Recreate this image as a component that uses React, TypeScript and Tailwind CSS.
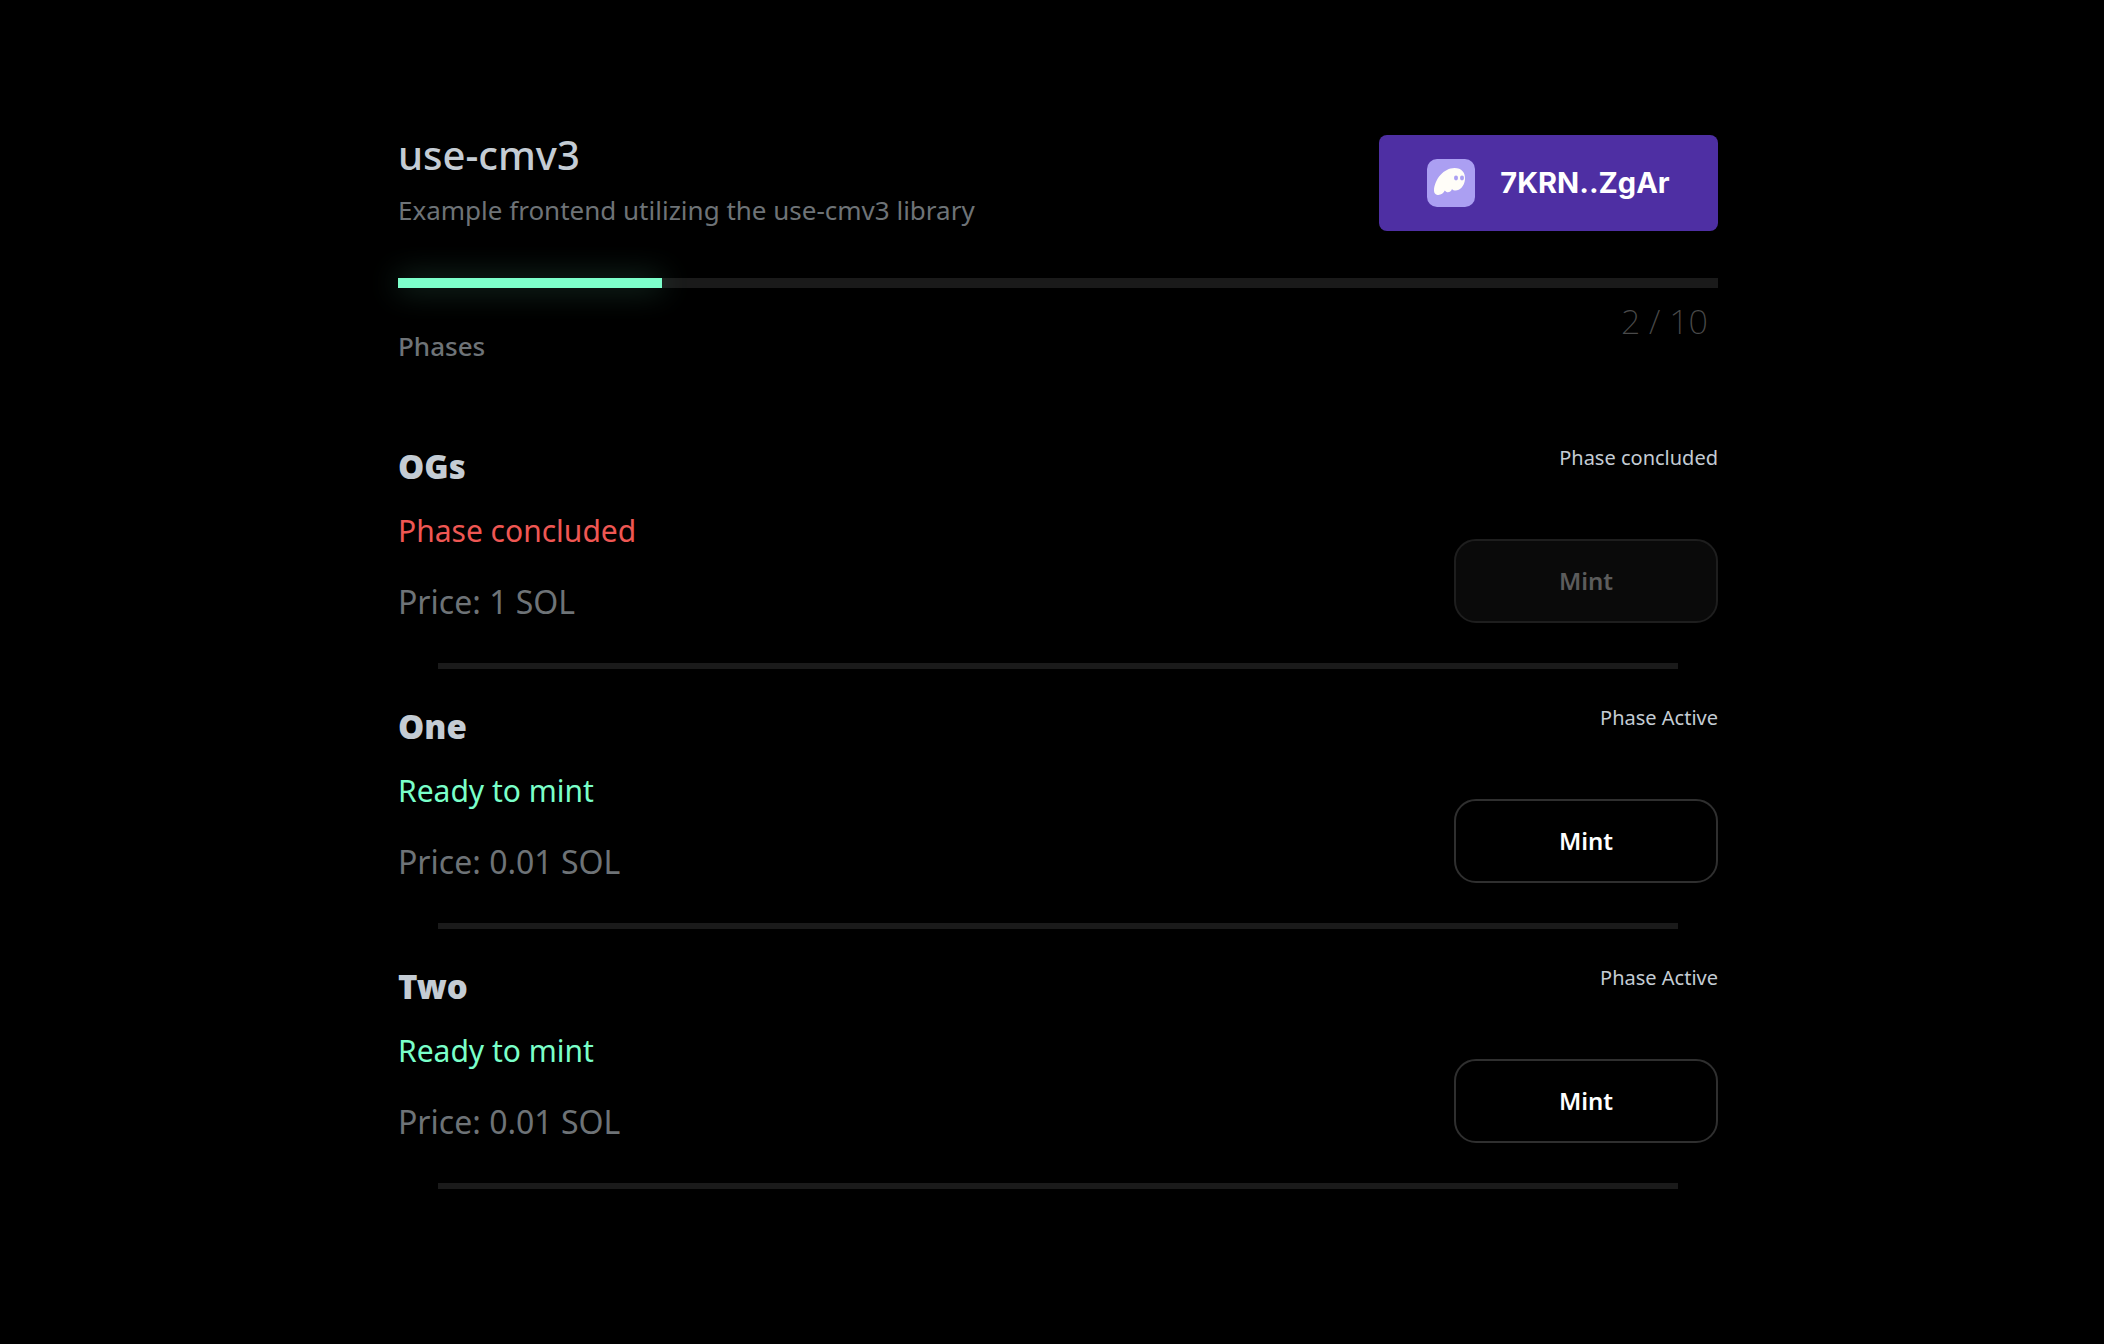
const phases = [
  { name: "OGs", badge: "Phase concluded", status: "Phase concluded", price: "1 SOL", active: false },
  { name: "One", badge: "Phase Active", status: "Ready to mint", price: "0.01 SOL", active: true },
  { name: "Two", badge: "Phase Active", status: "Ready to mint", price: "0.01 SOL", active: true },
];

function GhostIcon() {
  return (
    <svg width="48" height="48" viewBox="0 0 48 48" className="shrink-0">
      <rect width="48" height="48" rx="10" fill="#ab9ff2" />
      <path
        d="M7 31.5C7.5 20 17 9 27.5 9C34.5 9 38.6 13.5 38 20.5C37.4 27 33 31.5 28.5 31.5C27 31.5 25.8 31 25 30C24 32.6 21.6 33.8 19.6 33C18.8 32.7 18.2 32.2 17.8 31.6C16.6 34.4 13.4 36.4 10.6 36C8.4 35.7 6.9 34 7 31.5Z"
        fill="#fffdf8"
      />
      <ellipse cx="29" cy="19" rx="2" ry="2.4" fill="#ab9ff2" />
      <ellipse cx="35" cy="19" rx="2" ry="2.4" fill="#ab9ff2" />
    </svg>
  );
}

function PhaseRow({ phase }: { phase: (typeof phases)[number] }) {
  return (
    <div>
      <div className="flex h-[254px] justify-between pt-[33px] pb-[40px]">
        <div className="flex flex-col">
          <h3 className="text-[33px] leading-[50px] font-black text-[#c4ccd4]">{phase.name}</h3>
          <p
            className={
              phase.active
                ? "mt-[14px] text-[30px] leading-[50px] text-[#7affc9]"
                : "mt-[14px] text-[30px] leading-[50px] text-[#ef5753]"
            }
          >
            {phase.status}
          </p>
          <p className="mt-[21px] text-[32px] leading-[50px] text-[#6e7377]">Price: {phase.price}</p>
        </div>

        <div className="flex flex-col items-end justify-between">
          <span className="text-[20px] leading-[32px] text-[#c4ccd4]">{phase.badge}</span>
          <button
            className={
              phase.active
                ? "h-[84px] w-[264px] rounded-[22px] border-2 border-[#2f2f2f] bg-black text-[24px] font-semibold text-white"
                : "h-[84px] w-[264px] rounded-[22px] border-2 border-[#1e1e1e] bg-[#0a0a0a] text-[24px] font-semibold text-[#5c5c5c]"
            }
          >
            Mint
          </button>
        </div>
      </div>
      <div className="mx-10 h-[6px] bg-[#1a1a1a]" />
    </div>
  );
}

export default function App() {
  return (
    <div
      className="flex min-h-screen justify-center bg-black pt-[135px] pl-3"
      style={{ fontFamily: '"Noto Sans", "Open Sans", sans-serif' }}
    >
      <div className="w-[1320px]">
        {/* HEADER */}
        <div className="flex items-start justify-between">
          <div>
            <h1 className="text-[40px] leading-[40px] font-medium text-[#c4ccd4]">use-cmv3</h1>
            <p className="mt-[15px] text-[26px] leading-[40px] text-[#6e7377]">
              Example frontend utilizing the use-cmv3 library
            </p>
          </div>
          <button className="flex h-[96px] w-[339px] items-center justify-center gap-[25px] rounded-lg bg-[#4e2fa3]">
            <GhostIcon />
            <span
              className="text-[29px] font-bold text-white"
              style={{ fontFamily: "Inter, sans-serif" }}
            >
              7KRN..ZgAr
            </span>
          </button>
        </div>

        {/* PROGRESS */}
        <div className="mt-[47px] h-[10px] bg-[#1a1a1a]">
          <div className="h-full w-1/5 bg-[#7dffcb] shadow-[0_0_30px_rgba(125,255,203,0.3)]" />
        </div>

        <div className="flex items-start justify-between pr-[10px]">
          <h2 className="mt-[38px] text-[26px] leading-[40px] font-medium text-[#6e7377]">Phases</h2>
          <span className="mt-[9px] text-[34px] leading-[48px] font-extralight text-[#4a4a4a]">2 / 10</span>
        </div>

        {/* PHASES */}
        <div className="mt-[43px]">
          {phases.map((phase) => (
            <PhaseRow key={phase.name} phase={phase} />
          ))}
        </div>
      </div>
    </div>
  );
}
